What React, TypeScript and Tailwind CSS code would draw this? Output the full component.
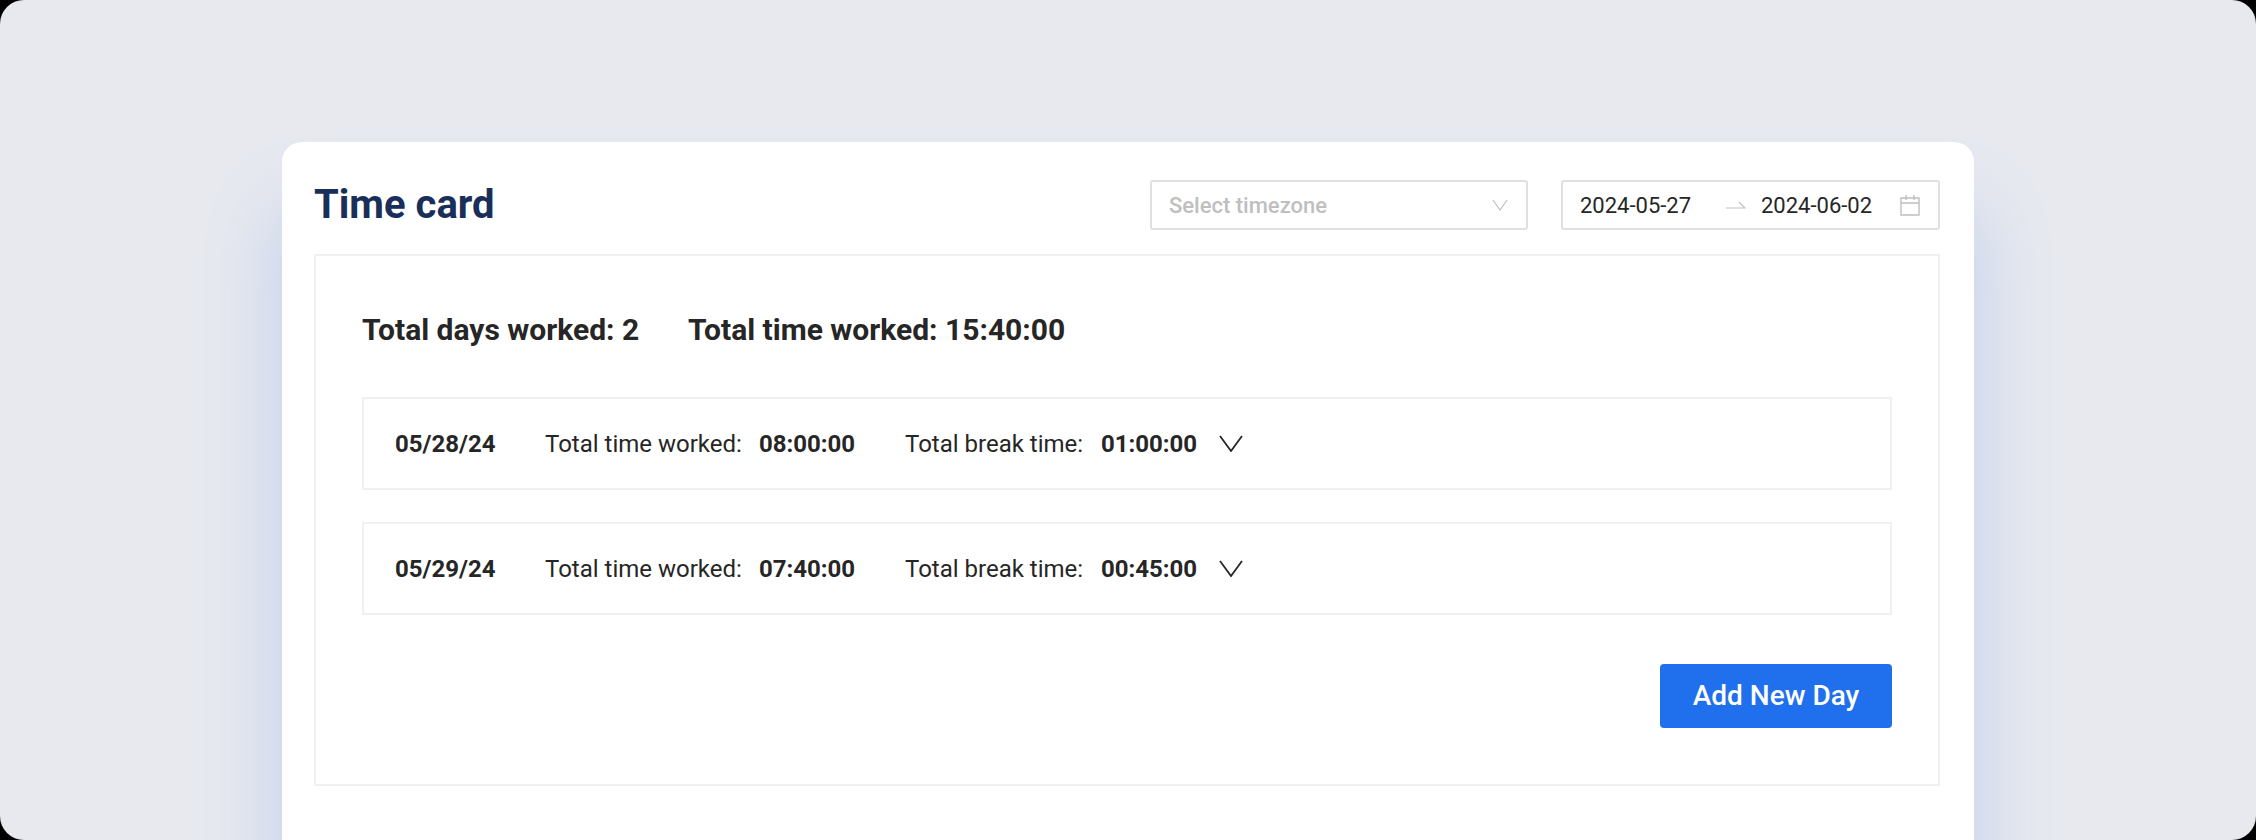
const days = [
  { date: '05/28/24', worked: '08:00:00', rest: '01:00:00' },
  { date: '05/29/24', worked: '07:40:00', rest: '00:45:00' },
];

function DayRow({ date, worked, rest }: { date: string; worked: string; rest: string }) {
  return (
    <div className="flex h-[93px] items-center border-2 border-[#eff0f2] pl-[31px] text-[24px] text-[#262626]">
      <span className="w-[150px] font-bold">{date}</span>
      <span className="w-[214px] whitespace-nowrap">Total time worked:</span>
      <span className="w-[146px] font-bold">{worked}</span>
      <span className="w-[196px] whitespace-nowrap">Total break time:</span>
      <span className="w-[118px] font-bold">{rest}</span>
      <svg viewBox="0 0 24 17" className="h-[17px] w-[24px]" fill="none" stroke="#262626" strokeWidth="1.8">
        <path d="M1 1 12 16 23 1" />
      </svg>
    </div>
  );
}

export default function App() {
  return (
    <div className="h-[840px] w-[2256px] overflow-hidden bg-black font-['Roboto',sans-serif]">
      <div className="h-[840px] overflow-hidden rounded-[24px] bg-[#e7e9ef] px-[282px] pt-[142px]">
        <div className="h-[760px] rounded-[20px] bg-white pl-[32px] pr-[34px] pt-[38px] shadow-[0_72px_72px_10px_#c8d3ec]">
          <div className="flex h-[50px] items-center">
            <h1 className="text-[40px] font-bold text-[#1a2e5a]">Time card</h1>
            <div className="ml-auto flex h-[50px] w-[378px] items-center justify-between rounded-[3px] border-2 border-[#e0e0e0] pl-[17px] pr-[18px] text-[22px] font-medium text-[#bfbfbf]">
              <span>Select timezone</span>
              <svg viewBox="0 0 16 12" className="h-[12px] w-[16px]" fill="none" stroke="#bfbfbf" strokeWidth="1.2">
                <path d="M1 1 8 11 15 1" />
              </svg>
            </div>
            <div className="ml-[33px] flex h-[50px] w-[379px] items-center rounded-[3px] border-2 border-[#e0e0e0] pl-[17px] pr-[18px] text-[22px] text-[#262626]">
              <span className="w-[146px]">2024-05-27</span>
              <svg viewBox="0 0 20 8" className="h-[8px] w-[20px]" fill="none" stroke="#bfbfbf" strokeWidth="1.2">
                <path d="M0 7H19L13 1" />
              </svg>
              <span className="ml-[15px]">2024-06-02</span>
              <svg viewBox="0 0 20 22" className="ml-auto h-[22px] w-[20px]" fill="none" stroke="#bfbfbf" strokeWidth="1.4">
                <path d="M1 4h18v17H1zM1 9h18M6 1v5M14 1v5" />
              </svg>
            </div>
          </div>

          <div className="mt-[24px] h-[532px] border-2 border-[#eff0f2] px-[46px] pt-[51px]">
            <div className="flex text-[30px] font-bold text-[#262626]">
              <span className="w-[326px]">Total days worked: 2</span>
              <span>Total time worked: 15:40:00</span>
            </div>
            <div className="mt-[45px] flex flex-col gap-[32px]">
              {days.map((d) => (
                <DayRow key={d.date} {...d} />
              ))}
            </div>
            <div className="mt-[49px] flex justify-end">
              <button className="h-[64px] w-[232px] rounded-[4px] bg-[#206fed] text-[28px] font-medium text-white">
                Add New Day
              </button>
            </div>
          </div>
        </div>
      </div>
    </div>
  );
}
